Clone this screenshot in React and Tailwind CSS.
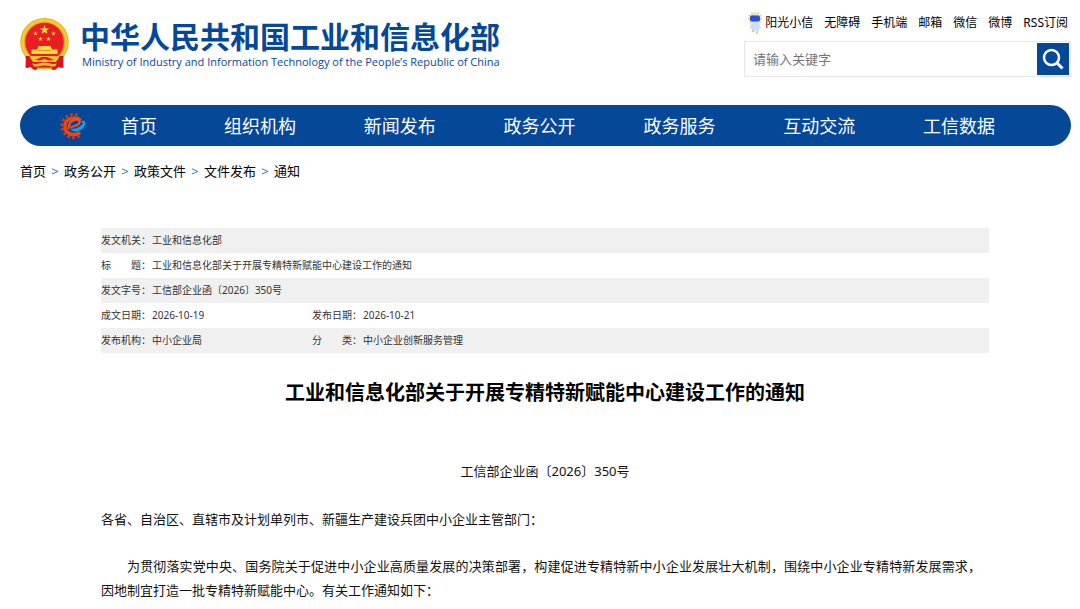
import clsx from 'clsx';

const TOP_LINKS = ['阳光小信', '无障碍', '手机端', '邮箱', '微信', '微博', 'RSS订阅'];

const NAV = ['组织机构', '新闻发布', '政务公开', '政务服务', '互动交流', '工信数据'];

const CRUMBS = ['首页', '政务公开', '政策文件', '文件发布', '通知'];

const META = [
  [['发文机关：', '工业和信息化部']],
  [['标　　题：', '工业和信息化部关于开展专精特新赋能中心建设工作的通知']],
  [['发文字号：', '工信部企业函〔2026〕350号']],
  [['成文日期：', '2026-10-19'], ['发布日期：', '2026-10-21']],
  [['发布机构：', '中小企业局'], ['分　　类：', '中小企业创新服务管理']]
];

const STAR = 'M0-5 1.2-1.6 4.8-1.5 1.9.6 2.9 4 0 2-2.9 4-1.9.6-4.8-1.5-1.2-1.6Z';

function Emblem() {
  return (
    <svg viewBox="0 0 49 53" className="w-[49px] h-[53px] shrink-0" aria-hidden="true">
      <path d="M6 36 5.500 50l5-1 3.500 3 6-2h9l6 2 3.500-3 5 1L43 36Z" fill="#d9151c" />
      <ellipse cx="24.500" cy="24" rx="24.300" ry="24" fill="#e6b026" />
      <ellipse cx="24.500" cy="24" rx="22" ry="21.800" fill="none" stroke="#f2cb3a" strokeWidth="2.500" />
      <circle cx="24.500" cy="24" r="19.300" fill="#ea1c24" />
      <g fill="#fbdc45">
        <path d={STAR} transform="translate(24.500 12)" />
        <path d={STAR} transform="translate(15.500 15.500) scale(.5)" />
        <path d={STAR} transform="translate(33.500 15.500) scale(.5)" />
        <path d={STAR} transform="translate(20.500 21) scale(.5)" />
        <path d={STAR} transform="translate(28.500 21) scale(.5)" />
        <path d="M18.500 28h12l1.500 3.500h5.500V36h-26v-4.500H17Z" />
      </g>
      <path d="M17.500 32.500h14" stroke="#d89a22" />
      <path d="M5.500 38h4l2 4h26l2-4h4L42 50l-5-2-3.500 4-4.500-2h-9l-4.500 2L12 48l-5 2Z" fill="#d9151c" />
      <path d="M10 38h29l-3 6H13Z" fill="#f3c631" />
      <path d="M15 42l7-3h5l7 3-5 .5-4.500-1.500-4.500 1.500Z" fill="#e01820" />
      <path d="M12 45.500c5 1.500 8-1 12.500-1s7.500 2.500 12.500 1l-2 3c-4 .5-6-1-10.500-1s-6.500 1.500-10.500 1Z" fill="#efbe2f" />
      <path d="M17 49.500h15v1.500H17Z" fill="#e6b026" />
    </svg>
  );
}

function Robot() {
  return (
    <svg viewBox="0 0 14 22" className="w-[14px] h-[22px] shrink-0" aria-hidden="true">
      <g fill="#f8d63c">
        <circle cx="4" cy="1.500" r="1" />
        <circle cx="7" cy="1" r="1" />
        <circle cx="10" cy="1.500" r="1" />
        <circle cx="1.300" cy="3.500" r="1" />
        <circle cx="12.700" cy="3.500" r="1" />
        <circle cx="1" cy="7" r=".9" />
        <circle cx="13" cy="7" r=".9" />
        <circle cx="2" cy="10.500" r=".8" />
        <circle cx="12" cy="10.500" r=".8" />
      </g>
      <rect x="1.500" y="2.500" width="11" height="8" rx="3" fill="#b9cdf6" />
      <rect x="2" y="3.500" width="10" height="6" rx="2" fill="#2a50d4" />
      <path d="M3.500 10.500h7.500l2 6-2 .5-.5 3H8.500l-1-2-1 2H4.500L4 17l-2.500-.5Z" fill="#cfdef4" />
      <circle cx="5" cy="19" r=".9" fill="#f5b840" />
      <circle cx="9" cy="20.800" r="1" fill="#f5b840" />
    </svg>
  );
}

function GearLogo() {
  return (
    <svg viewBox="0 0 28 28" className="w-7 h-7 shrink-0" fill="none" aria-hidden="true">
      <path d="M17.500 3.200A11.500 11.500 0 1 0 20 23.500" stroke="#e0330f" strokeWidth="3" strokeDasharray="2.600 2.200" />
      <path d="M20.500 8.500C17 4.500 5 5 5 14.500c0 7 8.500 10.500 15 6" stroke="#ee4514" strokeWidth="3.500" />
      <path d="M9 17c-1.500-5 3-9.500 7.500-9.500 5.500 0 4.500 6-6 7.500" stroke="#f4551f" strokeWidth="2" />
      <path d="M10.500 16.500c2.500 5 10 3.500 13.500-1.500 3-4.500 1.500-7.500-4.500-5.500 3.500-.3 4 1.500 1.800 3.800-2.500 2.700-7 4.200-10.800 3.200Z" fill="#219ae0" />
    </svg>
  );
}

function SearchBox() {
  return (
    <form className="flex w-[327px] border border-[#e6e6e6] p-px" onSubmit={e => e.preventDefault()}>
      <input
        type="text"
        aria-label="请输入关键字"
        placeholder="请输入关键字"
        className="flex-1 min-w-0 px-[7px] pt-0.5 text-[13px] outline-none placeholder:text-[#757575]"
      />
      <button type="submit" aria-label="搜索" className="flex items-center justify-center w-8 h-8 bg-[#064898]">
        <svg viewBox="0 0 22 22" className="w-[22px] h-[22px]" fill="none" stroke="#fff" strokeWidth="2.500">
          <circle cx="9.500" cy="9.500" r="7.500" />
          <path d="M15 15l5.500 5.500" strokeWidth="3" />
        </svg>
      </button>
    </form>
  );
}

function Header() {
  return (
    <header className="flex justify-between">
      <a href="#" className="flex pt-[18px] gap-[11px] text-[#064898]">
        <Emblem />
        <div>
          <h1 className="text-[30px] leading-[38px] font-bold whitespace-nowrap">中华人民共和国工业和信息化部</h1>
          <p className="pl-0.5 font-['Open_Sans',sans-serif] text-[11px] leading-3 font-medium whitespace-nowrap">
            Ministry of Industry and Information Technology of the People’s Republic of China
          </p>
        </div>
      </a>
      <div className="flex flex-col items-end pt-3">
        <div className="flex items-center gap-[3px] h-[21px] mb-2 pr-[3px]">
          <Robot />
          <ul className="flex gap-[11px] text-[12px] leading-5 whitespace-nowrap">
            {TOP_LINKS.map(label => (
              <li key={label}><a href="#">{label}</a></li>
            ))}
          </ul>
        </div>
        <SearchBox />
      </div>
    </header>
  );
}

function MainNav() {
  return (
    <nav className="flex items-center mt-7 pt-px pl-10 pr-[42px] h-[41px] rounded-full bg-[#064898] text-white text-[18px]">
      <GearLogo />
      <a href="#" className="mx-[33px] whitespace-nowrap">首页</a>
      <ul className="flex-1 grid grid-cols-6 text-center whitespace-nowrap">
        {NAV.map(label => (
          <li key={label}><a href="#">{label}</a></li>
        ))}
      </ul>
    </nav>
  );
}

function Breadcrumb() {
  return (
    <ol className="flex mt-[15px] text-[13px] leading-5">
      {CRUMBS.map((label, i) => (
        <li key={label} className="flex">
          {i > 0 && <span className="w-[18px] text-center text-[#2f6fb5]">&gt;</span>}
          <a href="#">{label}</a>
        </li>
      ))}
    </ol>
  );
}

function MetaTable() {
  return (
    <table className="w-full table-fixed text-left text-[10px] leading-[25px] text-[#333]">
      <colgroup>
        <col className="w-[51px]" />
        <col className="w-40" />
        <col className="w-[51px]" />
        <col />
      </colgroup>
      <tbody>
        {META.map((cells, i) => (
          <tr key={cells[0][0]} className={clsx(i % 2 === 0 && 'bg-[#f0f0f0]')}>
            {cells.map(([label, value]) => [
              <th key={label} className="p-0 font-normal whitespace-nowrap">{label}</th>,
              <td key={value} className="p-0" colSpan={cells.length === 1 ? 3 : 1}>{value}</td>
            ])}
          </tr>
        ))}
      </tbody>
    </table>
  );
}

export default function App() {
  return (
    <div className="pl-5 pr-[9px] bg-white text-black font-['Noto_Sans','Noto_Sans_CJK_SC',sans-serif]" lang="zh-CN">
      <Header />
      <MainNav />
      <Breadcrumb />

      <main className="mt-[47px] ml-[81px] mr-[82px]">
        <MetaTable />

        {/* Article */}
        <article className="text-[13px] leading-6 text-[#111]">
          <h2 className="mt-[25px] text-[20px] leading-[30px] font-bold text-center text-black">
            工业和信息化部关于开展专精特新赋能中心建设工作的通知
          </h2>
          <p className="mt-[51px] text-center">工信部企业函〔2026〕350号</p>
          <p className="mt-6">各省、自治区、直辖市及计划单列市、新疆生产建设兵团中小企业主管部门：</p>
          <p className="mt-[23px] pr-2 indent-[2em] text-justify">
            为贯彻落实党中央、国务院关于促进中小企业高质量发展的决策部署，构建促进专精特新中小企业发展壮大机制，围绕中小企业专精特新发展需求，因地制宜打造一批专精特新赋能中心。有关工作通知如下：
          </p>
        </article>
      </main>
    </div>
  );
}
